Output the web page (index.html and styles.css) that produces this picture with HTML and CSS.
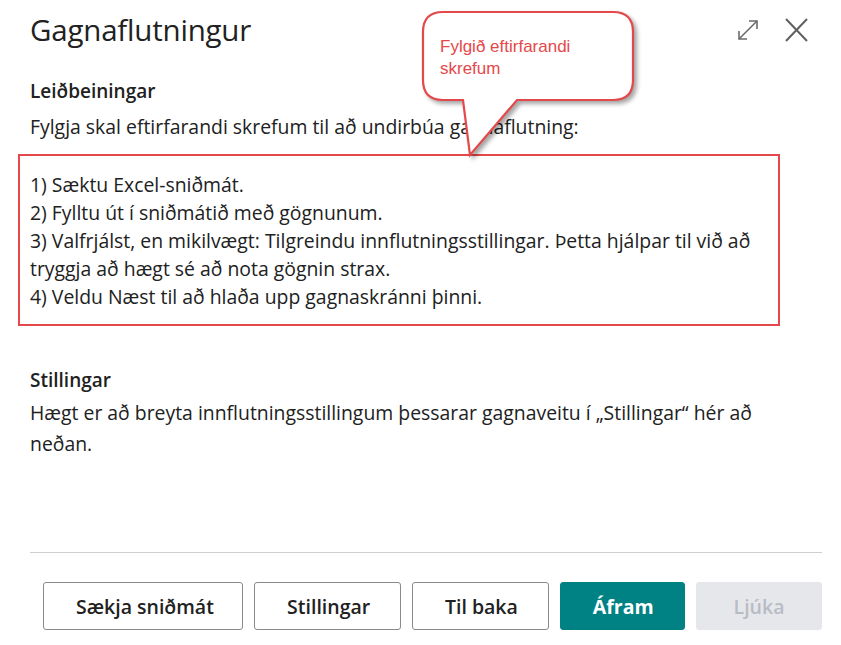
FILE: index.html
```html
<!DOCTYPE html>
<html lang="is">
<head>
    <meta charset="UTF-8">
    <meta name="viewport" content="width=device-width, initial-scale=1.0">
    <title>Gagnaflutningur</title>
    <link rel="stylesheet" href="styles.css">
</head>
<body>
    <div class="dialog">
        <header class="dialog-header">
            <h1>Gagnaflutningur</h1>
            <div class="header-actions">
                <button class="icon-btn" title="Stækka">
                    <svg width="24" height="24" viewBox="0 0 24 24" fill="none" stroke="#6b6b6b" stroke-width="1.6">
                        <path d="M3 21 L21 3"/>
                        <path d="M13 3 H21 V11"/>
                        <path d="M3 13 V21 H11"/>
                    </svg>
                </button>
                <button class="icon-btn" title="Loka">
                    <svg width="24" height="24" viewBox="0 0 24 24" fill="none" stroke="#606060" stroke-width="2">
                        <path d="M2 1 L23 23"/>
                        <path d="M23 1 L2 23"/>
                    </svg>
                </button>
            </div>
        </header>

        <main class="dialog-body">
            <section class="section">
                <h2>Leiðbeiningar</h2>
                <p>Fylgja skal eftirfarandi skrefum til að undirbúa gagnaflutning:</p>
                <div class="steps-box">
                    <p>1) Sæktu Excel-sniðmát.</p>
                    <p>2) Fylltu út í sniðmátið með gögnunum.</p>
                    <p>3) Valfrjálst, en mikilvægt: Tilgreindu innflutningsstillingar. Þetta hjálpar til við að tryggja að hægt sé að nota gögnin strax.</p>
                    <p>4) Veldu Næst til að hlaða upp gagnaskránni þinni.</p>
                </div>
            </section>

            <section class="section settings">
                <h2>Stillingar</h2>
                <p>Hægt er að breyta innflutningsstillingum þessarar gagnaveitu í „Stillingar“ hér að neðan.</p>
            </section>
        </main>

        <footer class="dialog-footer">
            <button class="btn">Sækja sniðmát</button>
            <button class="btn">Stillingar</button>
            <button class="btn">Til baka</button>
            <button class="btn btn-primary">Áfram</button>
            <button class="btn btn-disabled" disabled>Ljúka</button>
        </footer>

        <!-- annotation callout -->
        <div class="callout">
            <svg class="callout-shape" width="230" height="160" viewBox="0 0 230 160">
                <path d="M28 7 H198 Q218 7 218 27 V75 Q218 95 198 95 H102 L55 150 L48 95 H28 Q8 95 8 75 V27 Q8 7 28 7 Z"
                      fill="#fff" stroke="#e5484a" stroke-width="2.2" stroke-linejoin="miter"/>
            </svg>
            <div class="callout-text">Fylgið eftirfarandi<br>skrefum</div>
        </div>
    </div>
</body>
</html>
```

FILE: styles.css
```css
* {
    box-sizing: border-box;
}
body {
    margin: 0;
    font-family: "Open Sans", "Noto Sans", sans-serif;
    color: #212121;
    background: #fff;
}
.dialog {
    position: relative;
    width: 841px;
    height: 645px;
    display: flex;
    flex-direction: column;
    padding: 0 19px 0 30px;
}
.dialog-header {
    display: flex;
    justify-content: space-between;
    align-items: center;
    height: 60px;
}
.dialog-header h1 {
    margin: 0 0 2px;
    font-size: 29.5px;
    font-weight: 500;
    letter-spacing: -0.2px;
}
.header-actions {
    display: flex;
    gap: 24px;
    margin-right: 14px;
}
.icon-btn {
    border: none;
    background: none;
    padding: 0;
    cursor: pointer;
    display: flex;
}
.dialog-body {
    flex: 1;
}
.section h2 {
    margin: 18px 0 9px;
    font-size: 19px;
    font-weight: 600;
}
.section p {
    margin: 0;
    font-size: 19.4px;
    line-height: 28px;
}
.steps-box {
    margin: 13px 42px 0 -12px;
    padding: 15px 10px 13px 10px;
    border: 2px solid #e5484a;
}
.settings {
    margin-top: 41px;
}
.settings h2 {
    margin-bottom: 4px;
}
.settings p {
    line-height: 31px;
    padding-right: 30px;
}
.dialog-footer {
    display: flex;
    justify-content: flex-end;
    gap: 11px;
    border-top: 1px solid #cfcfcf;
    padding: 29px 0 15px 13px;
}
.btn {
    height: 48px;
    min-width: 124px;
    padding: 0 32px;
    border: 1px solid #8a8a8a;
    border-radius: 3px;
    background: #fff;
    color: #212121;
    font-family: inherit;
    font-size: 19.5px;
    font-weight: 600;
    white-space: nowrap;
    cursor: pointer;
}
.btn-primary {
    background: #008284;
    border-color: #008284;
    color: #fff;
    font-weight: 700;
}
.btn-disabled {
    background: #e6e7ea;
    border-color: #e6e7ea;
    color: #b8bcc4;
    min-width: 126px;
    cursor: default;
}
.callout {
    position: absolute;
    left: 415px;
    top: 5px;
    width: 230px;
    height: 160px;
}
.callout-shape {
    filter: drop-shadow(3px 3px 2px rgba(0, 0, 0, 0.35));
}
.callout-text {
    position: absolute;
    left: 25px;
    top: 31px;
    font-family: "Liberation Sans", Arial, sans-serif;
    font-size: 17px;
    line-height: 22px;
    color: #e5484a;
}
```
